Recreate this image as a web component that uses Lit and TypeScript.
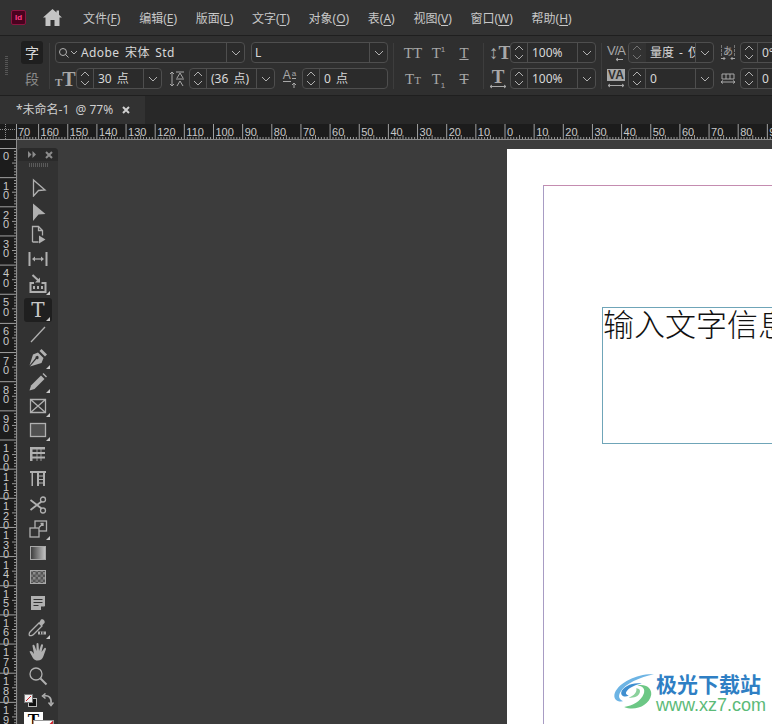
import { LitElement, html, css, svg } from "lit";
import { customElement } from "lit/decorators.js";

const MENUS = [
  ["文件(", "F", ")"],
  ["编辑(", "E", ")"],
  ["版面(", "L", ")"],
  ["文字(", "T", ")"],
  ["对象(", "O", ")"],
  ["表(", "A", ")"],
  ["视图(", "V", ")"],
  ["窗口(", "W", ")"],
  ["帮助(", "H", ")"],
];

const line = "fill:none;stroke:currentColor;stroke-width:1.3";

const ICONS: Record<string, unknown> = {
  select: svg`<path d="M5.500 3 17 13l-6.500.5L5.500 19z" style=${line} />`,
  direct: svg`<path d="M5 2.500 17.500 13l-7 .5L5 20z" fill="currentColor" />`,
  page: svg`<path d="M4.500 17V1.500h6l4 4v5M4.500 17h6M10.500 1.500v4h4" style=${line} /><path d="M11 10.500l6.500 4-6.500 4z" fill="currentColor" />`,
  gap: svg`<path d="M1.500 3v14M18.500 3v14" style="fill:none;stroke:currentColor;stroke-width:2" /><path d="M5 10h10" style=${line} /><path d="M4 10l3-2.500v5zM16 10l-3-2.500v5z" fill="currentColor" />`,
  collector: svg`<path d="M2.500 8v10h15V9h-4M6 9H2.500" style="fill:none;stroke:currentColor;stroke-width:2" /><path d="M4.500 1l6.500 6" style="fill:none;stroke:currentColor;stroke-width:2" /><path d="M12 8.500V3.500L7 8.500z" fill="currentColor" /><path d="M5 12h2v3H5zM9 12h2v3H9zM13 12h2v3h-2z" fill="currentColor" />`,
  stroke: svg`<path d="M3 18 17 3" style=${line} />`,
  pen: svg`<path fill-rule="evenodd" d="M10 4.500 15.500 10l-2 5L2 18.500l6.500-7.500a1.600 1.600 0 1 0-1-1L1.500 17.500 5 6.500z" fill="currentColor" /><path d="M11.500 3l2-2L19 6.500l-2 2z" fill="currentColor" />`,
  pencil: svg`<path d="M13 3.500 16.500 7 6.500 17 1.500 18.500 3 13.500z" fill="currentColor" /><path d="M14.500 2l1-1 3.500 3.500-1 1z" fill="currentColor" />`,
  frame: svg`<path d="M2.500 3.500h15v13h-15zM2.500 3.500l15 13M17.500 3.500l-15 13" style=${line} />`,
  rect: svg`<rect x="2.500" y="3.500" width="15" height="13" style="fill:#505050;stroke:currentColor;stroke-width:1.300" />`,
  table: svg`<path d="M2 3h15v2.500H4.500V8H17v2H4.500v2.500H17v2H4.500V17H2z" fill="currentColor" /><path d="M9 3v14M13 3v14" stroke="currentColor" stroke-width=".8" />`,
  columns: svg`<path d="M2 3h16v2h-1v13h-2V5h-4v13H9V5H5v13H3.500V5H2z" fill="currentColor" /><path d="M10 8h6M10 11.500h6M10 15h6" stroke="currentColor" stroke-width="1" />`,
  scissors: svg`<circle cx="15" cy="4.500" r="2.500" style=${line} /><circle cx="15" cy="15.500" r="2.500" style=${line} /><path d="M2.500 5l11 8.500M2.500 15l11-8.500" style="fill:none;stroke:currentColor;stroke-width:1.800" />`,
  transform: svg`<rect x="7" y="2" width="11.500" height="10" style=${line} /><rect x="2" y="9" width="9" height="9" style="fill:#323232;stroke:currentColor;stroke-width:1.300" /><path d="M11 8.500l4-4M12.500 4.500H15V7" style=${line} />`,
  gradient: svg`<defs><linearGradient id="gr"><stop offset="0" stop-color="#3a3a3a" /><stop offset="1" stop-color="#c4c4c4" /></linearGradient></defs><rect x="2.500" y="3.500" width="15" height="13" style="fill:url(#gr);stroke:#a8a8a8" />`,
  feather: svg`<defs><pattern id="ck" width="5" height="5" patternUnits="userSpaceOnUse"><rect width="5" height="5" fill="#555" /><rect width="2.500" height="2.500" fill="#8a8a8a" /><rect x="2.500" y="2.500" width="2.500" height="2.500" fill="#777" /></pattern></defs><rect x="2.500" y="3.500" width="15" height="13" style="fill:url(#ck);stroke:#a8a8a8" />`,
  note: svg`<path d="M3 3h14v10l-4 4H3z" fill="currentColor" /><path d="M5.500 6.500h9M5.500 9.500h9M5.500 12.500h5" stroke="#323232" stroke-width="1.200" /><path d="M13 13.500h4l-4 4z" fill="#323232" />`,
  dropper: svg`<path d="M13 1.500c2-1 4.500 1.500 3.500 3.500L14 7.500 11 5z" fill="currentColor" /><path d="M11 5l3 3-8.500 8.500c-1 1-3.500 1.500-4 1s-.5-2.500.5-3.500z" style=${line} /><path d="M10 13.500h8v3h-8z" fill="currentColor" /><path d="M12.500 13.500v3M15 13.500v3" stroke="#323232" />`,
  hand: svg`<path d="M1.500 9.500c1-1 2.200-.5 3 .5l1.500 2L4.500 4a1 1 0 0 1 2-.5L8.500 9 8.500 2a1 1 0 0 1 2 0L11 9l2-6a1 1 0 0 1 2 .5L13.500 10l3-4a1 1 0 0 1 1.500 1l-2.500 7c-1 3-3 4.500-6 4.500-3.500 0-4.500-2-8-9z" fill="currentColor" />`,
  zoom: svg`<circle cx="8" cy="8" r="6" style=${line} /><path d="M12.500 12.500l6 6" style="fill:none;stroke:currentColor;stroke-width:2" />`,
};

const TOOLS: { name: string; gap?: number; fly?: boolean }[] = [
  { name: "select" },
  { name: "direct" },
  { name: "page" },
  { name: "gap" },
  { name: "collector", gap: 1, fly: true },
  { name: "type", gap: 2, fly: true },
  { name: "stroke" },
  { name: "pen", fly: true },
  { name: "pencil", fly: true },
  { name: "frame", fly: true },
  { name: "rect", fly: true },
  { name: "table" },
  { name: "columns" },
  { name: "scissors", gap: 3 },
  { name: "transform", fly: true },
  { name: "gradient" },
  { name: "feather" },
  { name: "note", gap: 2 },
  { name: "dropper", gap: 1, fly: true },
  { name: "hand" },
  { name: "zoom" },
];

const STEP = 29.15;

function hRuler() {
  const zero = 505;
  const marks = [];
  // the 170 label is clipped by the corner box, only its last digits show
  marks.push(svg`<path d="M16.500 0v15" stroke="#a0a0a0" />`);
  marks.push(svg`<text x="18" y="12" class="tick-label">70</text>`);
  for (let n = -17; n <= 9; n++) {
    const x = zero + n * STEP;
    if (n !== -17) {
      marks.push(svg`<path d="M${x} 0v15" stroke="#a0a0a0" />`);
      const label = String(Math.abs(n) * 10);
      marks.push(svg`<text x=${x + 2} y="12" class="tick-label">${label}</text>`);
    }
    for (let i = 1; i < 10; i++) {
      const h = i === 5 ? 4 : 2;
      const mx = x + (i * STEP) / 10;
      marks.push(svg`<path d="M${mx} ${15 - h}v${h}" stroke="#9a9a9a" />`);
    }
  }
  return html`<svg class="ruler-h" width="756" height="15" viewBox="16 0 756 15">${marks}</svg>`;
}

function vRuler() {
  const zero = 8.5;
  const marks = [];
  for (let n = 0; n <= 19; n++) {
    const y = zero + n * STEP;
    marks.push(svg`<path d="M0 ${y}h16" stroke="#a0a0a0" />`);
    String(n * 10)
      .split("")
      .forEach((digit, i) => {
        const ty = n === 0 ? y + 11 : y + 12 + i * 9.5;
        marks.push(svg`<text x="3" y=${ty} class="tick-label">${digit}</text>`);
      });
    for (let i = 1; i < 10; i++) {
      const w = i === 5 ? 4 : 2;
      const my = y + (i * STEP) / 10;
      marks.push(svg`<path d="M${16 - w} ${my}h${w}" stroke="#9a9a9a" />`);
    }
  }
  return html`<svg class="ruler-v" width="16" height="584">${marks}</svg>`;
}

const chevron = html`<svg class="chev" width="10" height="6" viewBox="0 0 10 6"><path d="M1 1l4 4 4-4" /></svg>`;

function combo(text: string, opts: { w?: number; chev?: boolean; off?: boolean } = {}) {
  const { w = 86, chev = true, off = false } = opts;
  return html`<div class="combo" style="width:${w}px">
    <div class="stepper ${off ? "off" : ""}">
      <svg width="10" height="6" viewBox="0 0 10 6" class="chev"><path d="M1 5l4-4 4 4" /></svg>
      <svg width="10" height="6" viewBox="0 0 10 6" class="chev"><path d="M1 1l4 4 4-4" /></svg>
    </div>
    <div class="value">${text}</div>
    ${chev ? html`<div class="drop">${chevron}</div>` : ""}
  </div>`;
}

@customElement("app-root")
export class AppRoot extends LitElement {
  static styles = css`
    :host {
      display: flex;
      flex-direction: column;
      width: 772px;
      height: 724px;
      overflow: hidden;
      background: #3c3c3c;
      font-family: "Noto Sans", "Noto Sans CJK SC", sans-serif;
      color: #c8c8c8;
      font-size: 12px;
    }
    .menubar {
      height: 35px;
      flex: none;
      display: flex;
      align-items: center;
      background: #323232;
      border-bottom: 1px solid #1f1f1f;
    }
    .logo {
      width: 13px;
      height: 13px;
      margin-left: 11px;
      border-radius: 2px;
      background: #49021f;
      border: 1px solid #8c1440;
      color: #ff3e88;
      font: bold 8px/13px "Liberation Sans", sans-serif;
      text-align: center;
    }
    .home {
      margin-left: 17px;
      color: #c4c4c4;
      display: block;
    }
    .menus {
      display: flex;
      gap: 18.7px;
      margin-left: 21px;
    }
    .menus span {
      white-space: nowrap;
    }
    .menus u {
      text-underline-offset: 2px;
    }
    .panel {
      height: 60px;
      flex: none;
      display: flex;
      align-items: center;
      box-sizing: border-box;
      background: #2f2f2f;
      border-bottom: 1px solid #1f1f1f;
      white-space: nowrap;
    }
    .grip {
      width: 3px;
      height: 20px;
      flex: none;
      margin: 0 13px 0 5px;
      background: repeating-linear-gradient(#555 0 1px, transparent 1px 2px);
    }
    .para {
      width: 22px;
      flex: none;
      display: flex;
      flex-direction: column;
      align-items: center;
      gap: 3px;
      font-size: 14px;
      line-height: 23px;
      font-family: "Noto Sans CJK SC", sans-serif;
    }
    .para b {
      font-weight: 400;
      width: 22px;
      height: 23px;
      text-align: center;
      background: #1f1f1f;
      border-radius: 3px;
      color: #d8d8d8;
    }
    .para i {
      font-style: normal;
      color: #8c8c8c;
    }
    .sep {
      width: 1px;
      height: 46px;
      background: #3d3d3d;
      margin: 0 5px;
      flex: none;
    }
    .sep.first {
      margin-left: 6px;
    }
    .block {
      display: flex;
      flex-direction: column;
      gap: 6px;
      flex: none;
    }
    .row {
      display: flex;
      align-items: center;
      height: 20px;
    }
    .combo,
    .select {
      box-sizing: border-box;
      height: 21px;
      display: flex;
      align-items: stretch;
      border: 1px solid #4e4e4e;
      border-radius: 4px;
      background: #2b2b2b;
      flex: none;
      overflow: hidden;
    }
    .stepper {
      width: 16px;
      flex: none;
      box-sizing: content-box;
      display: flex;
      flex-direction: column;
      align-items: center;
      justify-content: center;
      gap: 3px;
      border-right: 1px solid #4e4e4e;
    }
    .stepper.off {
      background: #3a3a3a;
      opacity: 0.55;
      border-right-color: transparent;
    }
    .chev {
      display: block;
      flex: none;
    }
    .chev path {
      fill: none;
      stroke: #b0b0b0;
      stroke-width: 1;
    }
    .value {
      flex: 1;
      min-width: 0;
      overflow: hidden;
      padding-left: 4px;
      color: #d8d8d8;
      line-height: 20px;
      word-spacing: 2px;
    }
    .font-name {
      padding-left: 1px;
      letter-spacing: 0.4px;
    }
    .drop {
      width: 17px;
      flex: none;
      display: flex;
      align-items: center;
      justify-content: center;
      border-left: 1px solid #4e4e4e;
    }
    .search {
      display: flex;
      align-items: center;
      padding-left: 2px;
      flex: none;
    }
    .search svg {
      display: block;
    }
    .select .value {
      padding-left: 3px;
    }
    .ic {
      flex: none;
      color: #a8a8a8;
      font-family: "Liberation Serif", serif;
      text-align: center;
      line-height: 20px;
      height: 20px;
      overflow: visible;
    }
    .sans {
      font-family: "Liberation Sans", sans-serif;
    }
    .stack {
      flex: none;
      display: flex;
      flex-direction: column;
      align-items: center;
      color: #a8a8a8;
      font-family: "Liberation Sans", sans-serif;
    }
    .stack svg {
      display: block;
    }
    .stack-va {
      font-size: 13px;
      line-height: 13px;
      letter-spacing: -1px;
    }
    .stack-box {
      width: 18px;
      height: 12px;
      font-size: 12px;
      line-height: 12px;
      font-weight: bold;
      text-align: center;
      background: #a8a8a8;
      color: #2f2f2f;
      margin-bottom: 2px;
    }
    .stack-t {
      font: bold 19px/15px "Liberation Serif", serif;
    }
    .stack-kana {
      font: 10px/11px "Noto Sans CJK JP", sans-serif;
      border: 1px dashed #777;
      border-width: 0 1px;
      padding: 0 1px;
    }
    .aa {
      font-size: 12px;
      line-height: 12px;
      display: flex;
      align-items: flex-start;
      gap: 1px;
    }
    .aa u {
      text-decoration: none;
      border-bottom: 1px solid #a8a8a8;
      height: 12px;
    }
    .aa span {
      font-size: 8px;
      line-height: 9px;
      border-bottom: 1px solid #a8a8a8;
    }
    .glyphs {
      display: grid;
      grid-template-columns: 22px 29px 22px;
      row-gap: 6px;
      width: 73px;
      flex: none;
      margin-left: 3px;
      margin-right: 3px;
    }
    .glyphs .ic {
      font-size: 15px;
    }
    .glyphs sup,
    .glyphs sub {
      font-size: 8px;
      line-height: 0;
    }
    .small-t {
      font-size: 11px;
    }
    .tabs {
      height: 28px;
      flex: none;
      display: flex;
      background: #282828;
    }
    .tab {
      width: 145px;
      box-sizing: border-box;
      padding-left: 16px;
      background: #323232;
      line-height: 28px;
      color: #cfcfcf;
      font-size: 12px;
      display: flex;
      gap: 9px;
      white-space: pre;
    }
    .tab svg {
      align-self: center;
    }
    .top-ruler {
      height: 16px;
      flex: none;
      display: flex;
      background: #1c1c1c;
      border-bottom: 1px solid #8c8c8c;
      box-sizing: border-box;
    }
    .corner {
      width: 16px;
      flex: none;
    }
    .corner svg,
    .ruler-h,
    .ruler-v {
      display: block;
    }
    .tick-label {
      font: 11px "Liberation Sans", sans-serif;
      fill: #c8c8c8;
    }
    .work {
      flex: 1;
      min-height: 0;
      display: flex;
    }
    .left-ruler {
      width: 17px;
      box-sizing: border-box;
      flex: none;
      background: #1c1c1c;
      border-right: 1px solid #8c8c8c;
      overflow: hidden;
    }
    .canvas {
      flex: 1;
      position: relative;
      overflow: hidden;
      background: #3c3c3c;
    }
    .toolbox {
      position: absolute;
      left: 1px;
      top: 8px;
      bottom: 0;
      width: 40px;
      background: #323232;
      border-radius: 4px 4px 0 0;
      display: flex;
      flex-direction: column;
      align-items: center;
      overflow: hidden;
    }
    .toolbox-head {
      align-self: stretch;
      height: 13px;
      flex: none;
      background: #2a2a2a;
      display: flex;
      align-items: center;
      justify-content: space-between;
      padding: 0 5px 0 10px;
    }
    .toolbox-grip {
      width: 19px;
      height: 4px;
      flex: none;
      margin: 2px 0 8px;
      background: repeating-linear-gradient(90deg, #5a5a5a 0 1px, transparent 1px 2px);
    }
    .tool {
      position: relative;
      width: 28px;
      height: 24px;
      flex: none;
      display: flex;
      align-items: center;
      justify-content: center;
      color: #b0b0b0;
      border-radius: 3px;
    }
    .tool svg {
      display: block;
    }
    .tool.on {
      background: #1f1f1f;
    }
    .tool.fly::after {
      content: "";
      position: absolute;
      right: 2px;
      bottom: 1px;
      border: 2px solid transparent;
      border-right-color: #c8c8c8;
      border-bottom-color: #c8c8c8;
    }
    .type-t {
      font: 20px/24px "DejaVu Serif", serif;
      color: #c8c8c8;
    }
    .colours {
      align-self: stretch;
      display: flex;
      align-items: center;
      justify-content: space-between;
      height: 16px;
      margin-top: 4px;
      padding: 0 4px 0 6px;
      flex: none;
      color: #b0b0b0;
    }
    .swatch-fill {
      position: relative;
      align-self: flex-start;
      margin: 4px 0 0 6px;
      width: 19px;
      height: 12px;
      flex: none;
      background: #fff;
      color: #000;
      font: bold 17px/15px "Liberation Serif", serif;
      text-align: center;
    }
    .swatch-stroke {
      position: absolute;
      left: 9px;
      top: 8px;
      width: 19px;
      height: 10px;
      background: #fff;
      border: 1px solid #9a9a9a;
      overflow: hidden;
    }
    .swatch-stroke::after {
      content: "";
      position: absolute;
      right: -2px;
      top: 3px;
      width: 10px;
      height: 2px;
      background: #d0202a;
      transform: rotate(-45deg);
    }
    .page {
      position: absolute;
      left: 490px;
      top: 9px;
      right: -20px;
      bottom: -20px;
      background: #fff;
    }
    .margin {
      position: absolute;
      left: 36px;
      top: 36px;
      right: 0;
      bottom: 0;
      border-top: 1px solid #c48cb0;
      border-left: 1px solid #a89cc4;
    }
    .frame {
      position: absolute;
      left: 95px;
      top: 158px;
      width: 300px;
      height: 137px;
      box-sizing: border-box;
      border: 1px solid #6fa5b8;
      color: #111;
      font-family: "Noto Sans CJK SC", sans-serif;
      font-size: 31px;
      font-weight: 300;
      line-height: 29px;
      white-space: nowrap;
      overflow: hidden;
    }
    .mark {
      position: absolute;
      left: 612px;
      top: 670px;
      display: flex;
      gap: 2px;
      z-index: 2;
    }
    .mark svg {
      display: block;
      margin-top: 2px;
    }
    .mark-text {
      display: flex;
      flex-direction: column;
    }
    .mark-name {
      font-family: "Noto Sans CJK SC", sans-serif;
      font-size: 21px;
      line-height: 27px;
      font-weight: 700;
      color: #2f7fc4;
      white-space: nowrap;
    }
    .mark-url {
      font: 18px/17px "Liberation Sans", sans-serif;
      color: #5cba78;
    }
  `;

  private renderTool(tool: { name: string; gap?: number; fly?: boolean }) {
    const on = tool.name === "type";
    return html`<div
      class="tool ${on ? "on" : ""} ${tool.fly ? "fly" : ""}"
      style=${tool.gap ? `margin-top:${tool.gap}px` : ""}
    >
      ${on
        ? html`<span class="type-t">T</span>`
        : html`<svg width="20" height="20" viewBox="0 0 20 20">${ICONS[tool.name]}</svg>`}
    </div>`;
  }

  render() {
    return html`
      <div class="menubar">
        <div class="logo">Id</div>
        <svg class="home" width="19" height="17" viewBox="0 0 19 17" fill="currentColor">
          <path d="M9.500 0 0 8.500h2.500V17h5v-6h4v6h5V8.500H19l-3-2.700V1.500h-2.500v2z" />
        </svg>
        <div class="menus">
          ${MENUS.map(([a, k, b]) => html`<span>${a}<u>${k}</u>${b}</span>`)}
        </div>
      </div>

      <div class="panel">
        <div class="grip"></div>
        <div class="para"><b>字</b><i>段</i></div>
        <div class="sep first"></div>

        <div class="block">
          <div class="row">
            <div class="select" style="width:190px">
              <div class="search">
                <svg width="20" height="12" viewBox="0 0 20 12" fill="none" stroke="#b0b0b0">
                  <circle cx="5" cy="5" r="3.500" />
                  <path d="M7.500 7.500l3 3M13 4l3 3 3-3" />
                </svg>
              </div>
              <div class="value font-name">Adobe 宋体 Std</div>
              <div class="drop">${chevron}</div>
            </div>
            <div class="select" style="width:137px;margin-left:6px">
              <div class="value">L</div>
              <div class="drop">${chevron}</div>
            </div>
          </div>
          <div class="row">
            <div class="ic" style="width:18px;font-weight:bold;font-size:20px">
              <span style="font-size:11px">T</span>T
            </div>
            <div style="margin-left:3px">${combo("30 点")}</div>
            <svg class="ic" style="margin-left:7px" width="16" height="20" viewBox="0 0 16 20" fill="none" stroke="#a8a8a8">
              <path d="M3 3v14M1 5l2-2 2 2M1 15l2 2 2-2M7 3h8M7 10h8" />
              <path d="M8 9l3-5 3 5M8 17l3-5 3 5" />
            </svg>
            <div style="margin-left:4px">${combo("(36 点)")}</div>
            <div class="stack" style="margin-left:7px;width:15px">
              <div class="aa"><u>A</u><span>a</span></div>
              <svg width="15" height="6" viewBox="0 0 15 6" fill="none" stroke="#a8a8a8"><path d="M12 6V1M10 3l2-2 2 2" /></svg>
            </div>
            <div style="margin-left:5px">${combo("0 点", { chev: false })}</div>
          </div>
        </div>

        <div class="sep"></div>

        <div class="glyphs">
          <div class="ic">TT</div>
          <div class="ic">T<sup class="sans">1</sup></div>
          <div class="ic"><u>T</u></div>
          <div class="ic">T<span class="small-t">T</span></div>
          <div class="ic">T<sub class="sans">1</sub></div>
          <div class="ic"><s>T</s></div>
        </div>

        <div class="sep"></div>

        <div class="block">
          <div class="row">
            <div class="ic" style="width:18px;font-size:19px;font-weight:bold">↕T</div>
            <div style="margin-left:3px">${combo("100%")}</div>
          </div>
          <div class="row">
            <div class="stack" style="width:18px">
              <div class="stack-t">T</div>
              <svg width="18" height="5" viewBox="0 0 18 5" fill="none" stroke="#a8a8a8"><path d="M1 2.500h16M1 2.500 3 1M1 2.500 3 4M17 2.500 15 1M17 2.500 15 4" /></svg>
            </div>
            <div style="margin-left:3px">${combo("100%")}</div>
          </div>
        </div>

        <div class="sep"></div>

        <div class="block">
          <div class="row">
            <div class="stack" style="width:18px">
              <div class="stack-va">V/A</div>
              <svg width="18" height="5" viewBox="0 0 18 5" fill="none" stroke="#a8a8a8"><path d="M16 2.500H9M9 2.500 11 1M9 2.500 11 4" /></svg>
            </div>
            <div style="margin-left:3px">${combo("量度  -  仅", { off: true })}</div>
          </div>
          <div class="row">
            <div class="stack" style="width:18px">
              <div class="stack-box">VA</div>
              <svg width="18" height="5" viewBox="0 0 18 5" fill="none" stroke="#a8a8a8"><path d="M1 2.500h16M1 2.500 3 1M1 2.500 3 4M17 2.500 15 1M17 2.500 15 4" /></svg>
            </div>
            <div style="margin-left:3px">${combo("0")}</div>
          </div>
        </div>

        <div class="block" style="margin-left:6px">
          <div class="row">
            <div class="stack" style="width:16px">
              <div class="stack-kana">あ</div>
              <svg width="16" height="5" viewBox="0 0 16 5" fill="none" stroke="#a8a8a8"><path d="M1 2.500h4M5 2.500 3.500 1M5 2.500 3.500 4M15 2.500h-4M11 2.500 12.500 1M11 2.500 12.500 4" /></svg>
            </div>
            <div style="margin-left:4px">${combo("0°")}</div>
          </div>
          <div class="row">
            <svg class="ic" width="16" height="20" viewBox="0 0 16 20" fill="none" stroke="#a8a8a8">
              <path d="M2 5h12v5H2zM6 5v5M10 5v5M1 13h14M1 13l2-1.500M1 13l2 1.500M15 13l-2-1.500M15 13l-2 1.500" />
            </svg>
            <div style="margin-left:4px">${combo("0")}</div>
          </div>
        </div>
      </div>

      <div class="tabs">
        <div class="tab">
          <span>*未命名-1  @ 77%</span>
          <svg width="8" height="8" viewBox="0 0 8 8" stroke="#d0d0d0" stroke-width="2"><path d="M1 1l6 6M7 1l-6 6" /></svg>
        </div>
      </div>

      <div class="top-ruler">
        <div class="corner">
          <svg width="16" height="15" viewBox="0 0 16 15" stroke="#8c8c8c" stroke-dasharray="1 1">
            <path d="M0 5.500h16M5.500 0v15" />
          </svg>
        </div>
        ${hRuler()}
      </div>

      <div class="work">
        <div class="left-ruler">${vRuler()}</div>
        <div class="canvas">
          <div class="page">
            <div class="margin"></div>
            <div class="frame">输入文字信息</div>
          </div>
          <div class="toolbox">
            <div class="toolbox-head">
              <svg width="8" height="7" viewBox="0 0 8 7" fill="#8c8c8c"><path d="M0 0l3.500 3.500L0 7zM4.500 0 8 3.500 4.500 7z" /></svg>
              <svg width="8" height="8" viewBox="0 0 8 8" stroke="#8c8c8c" stroke-width="2"><path d="M1 1l6 6M7 1l-6 6" /></svg>
            </div>
            <div class="toolbox-grip"></div>
            ${TOOLS.map((t) => this.renderTool(t))}
            <div class="colours">
              <svg width="13" height="13" viewBox="0 0 13 13">
                <rect x="4.500" y="4.500" width="8" height="8" fill="#111" stroke="#bbb" />
                <rect x=".5" y=".5" width="8" height="8" fill="#eee" stroke="#777" />
                <path d="M2 7l5-5" stroke="#d0202a" />
              </svg>
              <svg width="13" height="14" viewBox="0 0 13 14" fill="none" stroke="currentColor" stroke-width="1.500">
                <path d="M3 3c5-1 8 2 7 8" />
                <path d="M4.500.5 1.500 3l3 2.500M7.500 9.500l2.500 3 2.500-3" />
              </svg>
            </div>
            <div class="swatch-fill">T<div class="swatch-stroke"></div></div>
          </div>
        </div>
      </div>

      <div class="mark">
        <svg width="42" height="40" viewBox="0 0 45 42">
          <path d="M45 2C28 1 8 10 3 22c-2 6 2 10 9 9-4-2-6-5-3-10C14 12 30 5 45 2z" fill="#6db4e4" />
          <path d="M32 12c-10-2-20 3-22 9-1 4 3 6 8 4-3-1-4-3-2-5 3-4 10-7 16-8z" fill="#3f8fd0" />
          <path d="M13 37c11 5 27-1 29-13 1-7-6-12-15-10 6 0 9 4 7 9-3 8-12 13-21 14z" fill="#6cc785" />
          <path d="M18 27c6 1 12-2 12-7 0-2-2-3-4-3 1 4-2 8-8 10z" fill="#8bd19c" />
        </svg>
        <div class="mark-text">
          <div class="mark-name">极光下载站</div>
          <div class="mark-url">www.xz7.com</div>
        </div>
      </div>
    `;
  }
}
